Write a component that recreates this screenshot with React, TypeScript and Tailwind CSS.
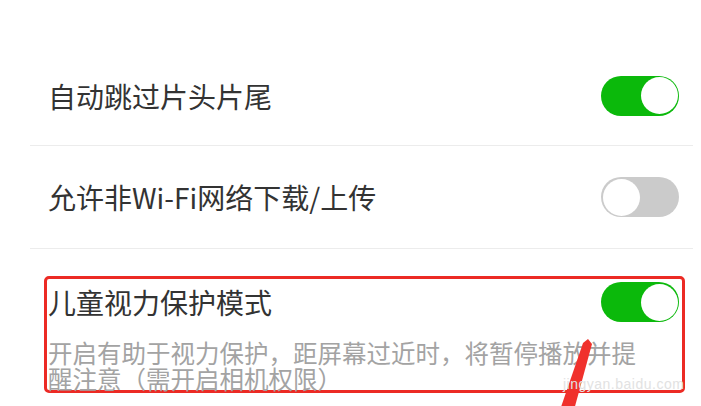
const cjk = { fontFamily: "'Noto Sans CJK SC', 'Noto Sans', sans-serif" };

const Toggle = ({ on }: { on: boolean }) => (
  <div
    className={
      on
        ? 'w-[78px] h-[40px] rounded-full bg-[#0bb90b] p-[1.5px] flex justify-end shrink-0'
        : 'w-[78px] h-[40px] rounded-full bg-[#cbcbcb] p-[1.5px] flex justify-start shrink-0'
    }
  >
    <div className="w-[37px] h-[37px] rounded-full bg-white" />
  </div>
);

export default function App() {
  return (
    <div className="relative w-[701px] h-[406px] bg-white overflow-hidden" style={cjk}>
      <div className="pt-[46px] pl-[30px] pr-[8px]">
        {/* auto skip */}
        <div className="h-[100px] flex items-center justify-between pl-[18px] pr-[14px] border-b border-[#ececec]">
          <span className="text-[28px] leading-none text-[#333333]">自动跳过片头片尾</span>
          <Toggle on />
        </div>

        {/* non wifi */}
        <div className="h-[103px] flex items-center justify-between pl-[18px] pr-[14px] border-b border-[#ececec]">
          <span className="text-[28px] leading-none text-[#333333]">允许非Wi-Fi网络下载/上传</span>
          <Toggle on={false} />
        </div>
      </div>

      {/* highlighted row */}
      <div className="ml-[44px] mt-[27px] w-[641px] h-[117px] border-[3px] border-[#ec2a24] rounded-[5px] pl-[1px] pr-[3px] pt-[3px]">
        <div className="flex items-center justify-between h-[40px]">
          <span className="text-[28px] leading-none text-[#333333]">儿童视力保护模式</span>
          <Toggle on />
        </div>
        <div className="mt-[18px] flex flex-col items-start text-[24.5px] leading-[26px] text-[#a3a3a3]">
          <span>开启有助于视力保护，距屏幕过近时，将暂停播放并提</span>
          <span>醒注意（需开启相机权限）</span>
        </div>
      </div>

      {/* annotation arrow */}
      <svg className="absolute left-[548px] top-[330px]" width="60" height="76" viewBox="0 0 60 76">
        <polygon points="12,80 26,80 44,14 40,9 35,13" fill="#f0312c" />
      </svg>

      {/* watermark */}
      <span
        className="absolute left-[563px] top-[377px] text-[14px] leading-none text-[#e2e2e2] tracking-[0.5px]"
        style={{ fontFamily: "'Liberation Sans', sans-serif" }}
      >
        jingyan.baidu.com
      </span>
    </div>
  );
}
